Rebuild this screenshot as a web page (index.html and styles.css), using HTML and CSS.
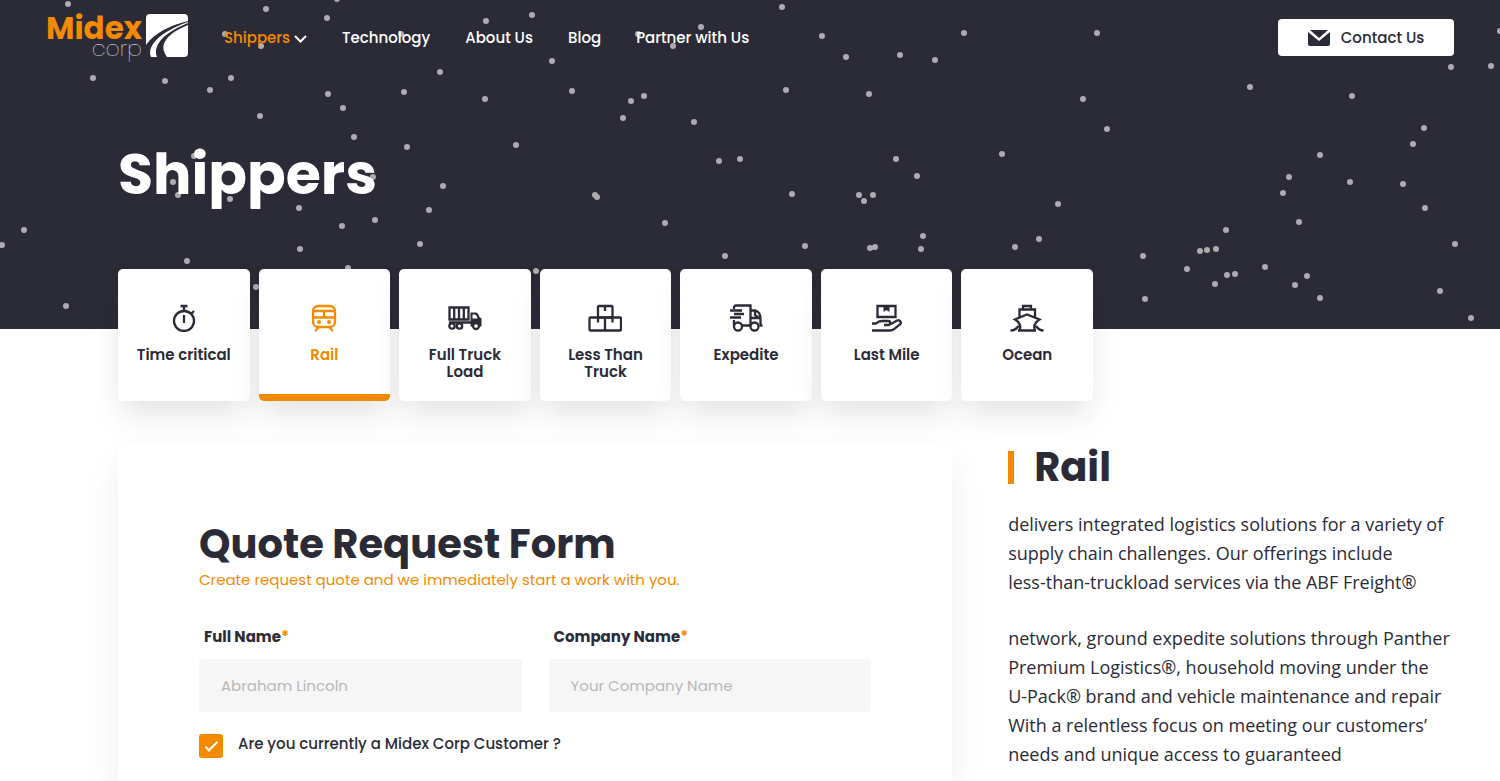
FILE: index.html
```html
<!DOCTYPE html>
<html lang="en">
<head>
    <meta charset="UTF-8">
    <meta name="viewport" content="width=device-width, initial-scale=1.0">
    <title>Shippers - Midex Corp</title>
    <link rel="stylesheet" href="styles.css">
</head>
<body>
    <div class="hero">
        <!-- Dots: every zero-length segment is drawn as a round cap -->
        <svg class="dots" aria-hidden="true">
            <path d="M68 4h0M266 9h0M327 18h0M486 21h0M532 15h0M701 27h0M673 46h0M638 34h0M401 34h0M261 46h0M225 34h0M93 78h0M165 81h0M210 90h0M231 78h0M328 94h0M343 108h0M260 116h0M354 137h0M407 147h0M404 92h0M440 72h0M485 99h0M552 61h0M572 91h0M644 96h0M631 101h0M623 118h0M694 122h0M516 145h0M719 161h0M740 159h0M443 186h0M595 195h0M597 197h0M429 210h0M665 223h0M375 220h0M342 226h0M300 249h0M299 208h0M230 199h0M178 195h0M173 182h0M373 177h0M194 156h0M420 244h0M725 256h0M536 271h0M348 268h0M256 287h0M187 261h0M66 306h0M24 230h0M2 245h0M337 -1h0"/>
            <path d="M782 7h0M822 36h0M846 57h0M900 55h0M935 60h0M964 33h0M1097 33h0M786 90h0M869 94h0M1083 99h0M1107 129h0M896 159h0M917 176h0M1002 154h0M792 194h0M859 195h0M873 195h0M864 201h0M1058 204h0M923 236h0M921 249h0M870 248h0M875 247h0M805 246h0M1039 239h0M1015 247h0M1250 87h0M1352 96h0M1451 67h0M1491 66h0M1500 31h0M1424 128h0M1413 144h0M1320 155h0M1289 177h0M1283 193h0M1350 182h0M1403 184h0M1425 208h0M1299 222h0M1455 244h0M1226 230h0M1200 251h0M1207 250h0M1216 249h0M1143 256h0M1187 269h0M1227 275h0M1235 274h0M1215 284h0M1265 267h0M1307 276h0M1295 285h0M1320 298h0M1145 299h0M1440 291h0M1471 318h0"/>
        </svg>

        <header class="topbar">
            <a class="logo" href="#">
                <span class="logo-text">
                    <span class="logo-midex">Midex</span>
                    <span class="logo-corp">corp</span>
                </span>
                <svg class="logo-mark" viewBox="0 0 42 43" aria-hidden="true">
                    <path fill="#fff" d="M4 0h34a4 4 0 0 1 4 4v3C25 11 8 19 0 31V4a4 4 0 0 1 4-4z"/>
                    <path fill="#fff" d="M42 11v28a4 4 0 0 1-4 4H21C12 31 20 20 42 11z"/>
                    <path fill="#fff" d="M5 43C1 33 11 19 42 8v1C20 18 6 30 11 43z"/>
                </svg>
            </a>
            <nav class="menu">
                <a class="current" href="#">Shippers
                    <svg class="chevron" viewBox="0 0 13 8" aria-hidden="true"><path d="M1 1l5.500 5.500L12 1"/></svg>
                </a>
                <a href="#">Technology</a>
                <a href="#">About Us</a>
                <a href="#">Blog</a>
                <a href="#">Partner with Us</a>
            </nav>
            <button class="contact" type="button">
                <svg viewBox="0 0 22 16" aria-hidden="true">
                    <path d="M2 0h18l-9 8z"/>
                    <path d="M0 2l11 9 11-9v12a2 2 0 0 1-2 2H2a2 2 0 0 1-2-2z"/>
                </svg>
                Contact Us
            </button>
        </header>

        <h1>Shippers</h1>
    </div>

    <!-- Services -->
    <nav class="services">
        <a href="#">
            <svg viewBox="0 0 34 28" aria-hidden="true">
                <circle cx="17" cy="17" r="10"/>
                <path d="M13.500 2h7M17 2v5M17 11v8M24.500 9.500l2.500-2.500"/>
            </svg>
            Time critical
        </a>
        <a class="active" href="#">
            <svg viewBox="0 0 34 28" aria-hidden="true">
                <rect x="6" y="2" width="22" height="21" rx="5"/>
                <path d="M7 7h20M7 13.500h20M17 7v6M12 23l-4 4M22 23l4 4"/>
                <path class="solid" d="M10 18a2 2 0 1 0 4 0a2 2 0 1 0-4 0zM20 18a2 2 0 1 0 4 0a2 2 0 1 0-4 0z"/>
            </svg>
            Rail
        </a>
        <a href="#">
            <svg viewBox="0 0 34 28" aria-hidden="true">
                <path d="M1.500 3.500h19v12h-19zM6.200 3.500v12M11 3.500v12M15.800 3.500v12M1 18.500h24"/>
                <path class="solid" d="M22.500 8.500h5c2 0 3 2 4 4.500l2 1.500v8h-11zM24.500 10.500v4h5c-.5-2.500-1.500-4-3-4z" fill-rule="evenodd"/>
                <g class="wheels"><circle cx="4" cy="22" r="2.700"/><circle cx="11.500" cy="22" r="2.700"/><circle cx="28" cy="22" r="3"/></g>
            </svg>
            Full Truck Load
        </a>
        <a href="#">
            <svg viewBox="0 0 34 28" aria-hidden="true">
                <rect x="10" y="2" width="14.500" height="11.500" rx="1"/>
                <rect x="1.500" y="13.500" width="31.500" height="13" rx="1"/>
                <path d="M17 2v5M17 13v13M10 13v5.500M24.500 13v5.500"/>
            </svg>
            Less Than Truck
        </a>
        <a href="#">
            <svg viewBox="0 0 34 28" aria-hidden="true">
                <path d="M5 5V3.500a2 2 0 0 1 2-2h14.500v20H13M5 16v5.500M21.500 6.500h5c3 1 5 4 5 8v7h2M21.500 21.500V14h10M26 7v4l4 3M1 6.500h12M5 10h10M1 13.500h11"/>
                <g class="wheels"><circle cx="9" cy="22.500" r="4"/><circle cx="25.500" cy="22.500" r="4"/></g>
            </svg>
            Expedite
        </a>
        <a href="#">
            <svg viewBox="0 0 34 28" aria-hidden="true">
                <path d="M7.500 2h18v11h-18z"/>
                <path class="solid" d="M13.500 2h6v6l-3-2-3 2z"/>
                <path d="M2 19.500h4c2-2 4-2.500 6-2.500h6c3 0 3 4 0 4h-4M21 20l6-3.500c3-1 5 2 3 4l-6 4.500c-1 1-2 1.500-4 1.500H2"/>
            </svg>
            Last Mile
        </a>
        <a href="#">
            <svg viewBox="0 0 34 28" aria-hidden="true">
                <path d="M13 5V2h8v3M9.500 13V5.500h15.500V13M9.500 26.500c2-5-.5-8.500-4.500-11l12-5 12.500 5c-4 2.500-6.500 6-4.500 11M.5 26.500c4 0 6-1.500 8-4.500M8 26.500h18M26 22c2 3 4 4.500 7.500 4.500"/>
            </svg>
            Ocean
        </a>
    </nav>

    <main class="content">
        <form class="quote">
            <h2>Quote Request Form</h2>
            <p class="lead">Create request quote and we immediately start a work with you.</p>

            <div class="fields">
                <div class="field">
                    <label for="fullName">Full Name<span>*</span></label>
                    <input type="text" id="fullName" placeholder="Abraham Lincoln">
                </div>
                <div class="field">
                    <label for="companyName">Company Name<span>*</span></label>
                    <input type="text" id="companyName" placeholder="Your Company Name">
                </div>
            </div>

            <div class="check">
                <input type="checkbox" id="customer" checked>
                <label for="customer">Are you currently a Midex Corp Customer ?</label>
            </div>
        </form>

        <aside class="about">
            <h2>Rail</h2>
            <p>delivers integrated logistics solutions for a variety of<br>
                supply chain challenges. Our offerings include<br>
                less-than-truckload services via the ABF Freight®</p>
            <p>network, ground expedite solutions through Panther<br>
                Premium Logistics®, household moving under the<br>
                U-Pack® brand and vehicle maintenance and repair<br>
                With a relentless focus on meeting our customers’<br>
                needs and unique access to guaranteed</p>
        </aside>
    </main>
</body>
</html>
```
FILE: styles.css
```css
* {
    box-sizing: border-box;
}

body {
    margin: 0;
    min-height: 100vh;
    display: flex;
    flex-direction: column;
    font-family: Poppins, Inter, sans-serif;
    font-size: 15px;
    color: #2a2b37;
    background: #fff;
}

h1, h2, p {
    margin: 0;
}

a {
    color: inherit;
    text-decoration: none;
}

.hero {
    position: relative;
    background: #2a2b37;
    color: #fff;
    padding-bottom: 119px;
}

.dots {
    position: absolute;
    top: 0;
    left: 0;
    width: 100%;
    height: 100%;
    stroke: #acacb1;
    stroke-width: 6;
    stroke-linecap: round;
}

.topbar {
    position: relative;
    display: flex;
    align-items: center;
    height: 75px;
    padding: 0 46px;
}

.logo {
    display: flex;
    align-items: center;
    gap: 4px;
    margin-bottom: 4px;
}

.logo-text {
    display: flex;
    flex-direction: column;
    align-items: flex-end;
    padding-top: 4px;
}

.logo-midex {
    font-size: 31px;
    line-height: 23px;
    font-weight: 700;
    color: #f48a00;
}

.logo-corp {
    font-size: 22px;
    line-height: 18px;
    font-weight: 200;
}

.logo-mark {
    width: 42px;
    height: 43px;
}

.menu {
    display: flex;
    gap: 35px;
    margin-left: 36px;
    font-weight: 500;
}

.menu .current {
    color: #f48a00;
}

.chevron {
    width: 13px;
    height: 8px;
    fill: none;
    stroke: #fff;
    stroke-width: 2;
}

.contact {
    display: flex;
    align-items: center;
    justify-content: center;
    gap: 11px;
    width: 176px;
    height: 37px;
    margin-left: auto;
    border: none;
    border-radius: 4px;
    background: #fff;
    color: #2a2b37;
    font: inherit;
    font-weight: 500;
    cursor: pointer;
}

.contact svg {
    width: 22px;
    height: 16px;
    fill: #2a2b37;
}

h1 {
    position: relative;
    margin: 63px 118px 0;
    font-size: 57px;
    line-height: 72px;
    font-weight: 700;
}

.services {
    position: relative;
    display: grid;
    grid-template-columns: repeat(7, 1fr);
    gap: 9px;
    width: 65%;
    margin: -60px 0 0 118px;
}

.services a {
    display: flex;
    flex-direction: column;
    align-items: center;
    gap: 14px;
    height: 132px;
    padding: 35px 16px 0;
    border-radius: 5px;
    background: #fff;
    box-shadow: 0 16px 32px -4px rgba(42, 30, 40, 0.13);
    line-height: 17px;
    font-weight: 600;
    text-align: center;
}

.services a.active {
    border-bottom: 7px solid #f48a00;
    color: #f48a00;
}

.services svg {
    flex: none;
    width: 34px;
    height: 28px;
    fill: none;
    stroke: currentColor;
    stroke-width: 2.3;
}

.services .solid {
    fill: currentColor;
    stroke: none;
}

.services .wheels {
    fill: #fff;
}

.content {
    flex: 1;
    display: grid;
    grid-template-columns: 15fr 8fr;
    gap: 56px;
    margin-top: 44px;
    padding: 0 47px 0 118px;
}

.quote {
    padding: 75px 81px 0;
    background: #fff;
    box-shadow: 0 16px 32px rgba(42, 42, 42, 0.08);
}

h2 {
    font-size: 40px;
    line-height: 48px;
    font-weight: 700;
}

.lead {
    line-height: 24px;
    color: #f48a00;
}

.fields {
    display: grid;
    grid-template-columns: 1fr 1fr;
    gap: 27px;
    margin-top: 33px;
}

.field label {
    display: block;
    padding-left: 5px;
    margin-bottom: 10px;
    line-height: 24px;
    font-weight: 700;
}

.field label span {
    color: #f48a00;
}

.field input {
    width: 100%;
    height: 53px;
    padding: 0 22px;
    border: none;
    border-radius: 4px;
    background: #f6f6f6;
    color: inherit;
    font: inherit;
}

.field input::placeholder {
    color: #b8b8b8;
}

.check {
    display: flex;
    align-items: flex-start;
    gap: 15px;
    margin-top: 22px;
    line-height: 20px;
    font-weight: 500;
}

.check input {
    appearance: none;
    display: grid;
    place-items: center;
    width: 24px;
    height: 24px;
    margin: 0;
    border-radius: 3px;
    background: #e5e5e5;
}

.check input:checked {
    background: #f48a00;
}

.check input:checked::after {
    content: "";
    width: 11px;
    height: 4px;
    margin-bottom: 3px;
    border-left: 2px solid #fff;
    border-bottom: 2px solid #fff;
    transform: rotate(-45deg);
}

.about h2 {
    display: flex;
    align-items: center;
    gap: 20px;
    line-height: 44px;
}

.about h2::before {
    content: "";
    width: 6px;
    height: 33px;
    background: #f48a00;
}

.about p {
    margin-top: 27px;
    font-family: "Open Sans", sans-serif;
    font-size: 18px;
    line-height: 29px;
}

.about h2 + p {
    margin-top: 21px;
}
```
